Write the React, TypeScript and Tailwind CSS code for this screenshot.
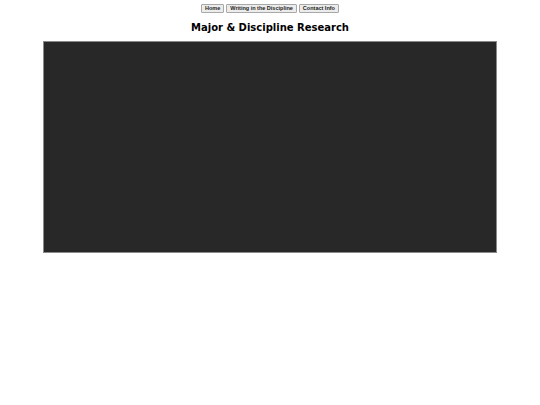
export default function App() {
  const links = ['Home', 'Writing in the Discipline', 'Contact Info']

  return (
    <div className="min-h-[405px] bg-white font-['Liberation_Sans',Arial,sans-serif] text-black">
      {/* Nav */}
      <nav className="flex justify-center gap-[2px] pt-[4px]">
        {links.map(label => (
          <button
            key={label}
            className="h-[9px] px-[3px] flex items-center border border-[#a8a8a8] bg-[#ececec] text-[5.5px] font-bold text-[#222] leading-none rounded-[1px]"
          >
            {label}
          </button>
        ))}
      </nav>

      <h1 className="mt-[7px] text-center font-['DejaVu_Sans',Verdana,sans-serif] text-[10px] font-bold leading-[15px]">
        Major &amp; Discipline Research
      </h1>

      {/* Embedded frame */}
      <div className="mx-[43px] mt-[6px] h-[212px] bg-[#282828] border border-[#8a8a8a]" />
    </div>
  )
}
